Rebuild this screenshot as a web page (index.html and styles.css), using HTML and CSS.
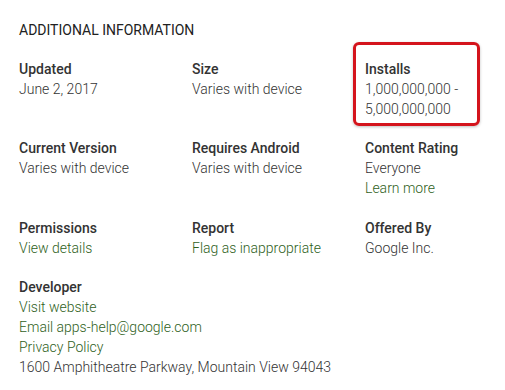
FILE: index.html
```html
<!DOCTYPE html>
<html lang="en">

<head>
    <meta charset="UTF-8">
    <meta name="viewport" content="width=device-width, initial-scale=1.0">
    <title>Additional Information</title>
    <link rel="stylesheet" href="styles.css">
</head>

<body>
    <div class="details">
        <h2 class="heading">Additional Information</h2>

        <div class="grid">
            <div class="meta">
                <div class="meta-title">Updated</div>
                <div class="meta-value">June 2, 2017</div>
            </div>
            <div class="meta">
                <div class="meta-title">Size</div>
                <div class="meta-value">Varies with device</div>
            </div>
            <div class="meta highlight">
                <div class="meta-title">Installs</div>
                <div class="meta-value">1,000,000,000 -<br>5,000,000,000</div>
            </div>

            <div class="meta">
                <div class="meta-title">Current Version</div>
                <div class="meta-value">Varies with device</div>
            </div>
            <div class="meta">
                <div class="meta-title">Requires Android</div>
                <div class="meta-value">Varies with device</div>
            </div>
            <div class="meta">
                <div class="meta-title">Content Rating</div>
                <div class="meta-value">Everyone</div>
                <a class="meta-link" href="#">Learn more</a>
            </div>

            <div class="meta">
                <div class="meta-title">Permissions</div>
                <a class="meta-link" href="#">View details</a>
            </div>
            <div class="meta">
                <div class="meta-title">Report</div>
                <a class="meta-link" href="#">Flag as inappropriate</a>
            </div>
            <div class="meta">
                <div class="meta-title">Offered By</div>
                <div class="meta-value">Google Inc.</div>
            </div>

            <div class="meta wide">
                <div class="meta-title">Developer</div>
                <a class="meta-link" href="#">Visit website</a>
                <a class="meta-link" href="#">Email apps-help@google.com</a>
                <a class="meta-link" href="#">Privacy Policy</a>
                <div class="meta-value">1600 Amphitheatre Parkway, Mountain View 94043</div>
            </div>
        </div>
    </div>
</body>

</html>
```

FILE: styles.css
```css
body {
    margin: 0;
    background-color: #fff;
    font-family: Roboto, 'Liberation Sans', sans-serif;
    font-size: 14px;
    line-height: 20px;
    color: #333;
}

.details {
    padding: 20px 19px;
}

.heading {
    margin: 0 0 19px;
    font-size: 14px;
    font-weight: 400;
    line-height: 20px;
    text-transform: uppercase;
    color: #212121;
}

.grid {
    display: grid;
    grid-template-columns: 173px 173px 1fr;
    row-gap: 19.4px;
}

.meta {
    display: flex;
    flex-direction: column;
    align-items: flex-start;
}

.meta.wide {
    grid-column: 1 / -1;
}

.meta-title {
    font-weight: 500;
    color: #333;
}

.meta-value {
    font-weight: 300;
    color: #333;
}

.meta-link {
    font-weight: 300;
    color: #2f5f1c;
    text-decoration: none;
}

.highlight {
    position: relative;
}

/* red callout around the installs figure */
.highlight::after {
    content: '';
    position: absolute;
    left: -12px;
    top: -17px;
    width: 121px;
    height: 78px;
    border: 3px solid #d4141c;
    border-radius: 6px;
    box-shadow: 0 1px 3px rgba(0, 0, 0, 0.25);
}
```
